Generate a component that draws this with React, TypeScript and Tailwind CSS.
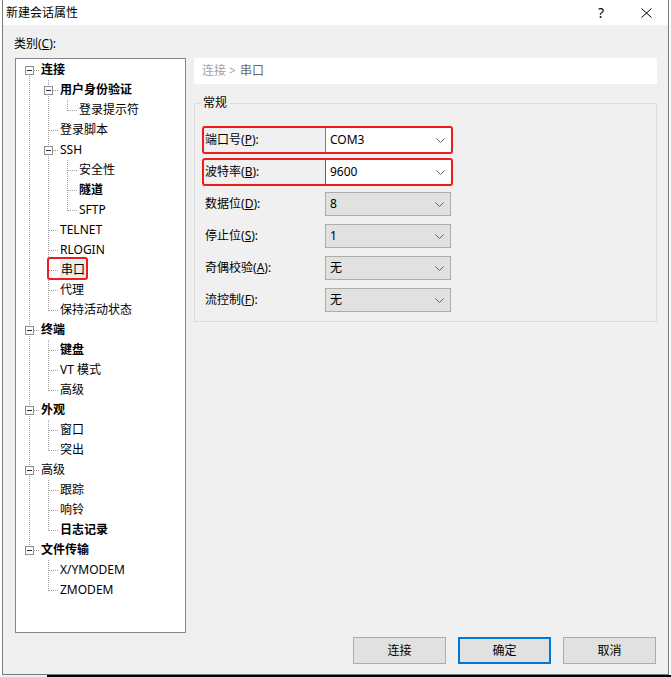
import clsx from "clsx"

type TreeNode = { label: string; bold?: boolean; selected?: boolean; children?: TreeNode[] }

type Row = { node: TreeNode; level: number; rails: boolean[]; last: boolean; first: boolean }

const tree: TreeNode[] = [
  {
    label: "连接",
    bold: true,
    children: [
      { label: "用户身份验证", bold: true, children: [{ label: "登录提示符" }] },
      { label: "登录脚本" },
      { label: "SSH", children: [{ label: "安全性" }, { label: "隧道", bold: true }, { label: "SFTP" }] },
      { label: "TELNET" },
      { label: "RLOGIN" },
      { label: "串口", selected: true },
      { label: "代理" },
      { label: "保持活动状态" },
    ],
  },
  { label: "终端", bold: true, children: [{ label: "键盘", bold: true }, { label: "VT 模式" }, { label: "高级" }] },
  { label: "外观", bold: true, children: [{ label: "窗口" }, { label: "突出" }] },
  { label: "高级", children: [{ label: "跟踪" }, { label: "响铃" }, { label: "日志记录", bold: true }] },
  { label: "文件传输", bold: true, children: [{ label: "X/YMODEM" }, { label: "ZMODEM" }] },
]

const flatten = (nodes: TreeNode[], level: number, rails: boolean[], out: Row[]) => {
  nodes.forEach((node, i) => {
    const last = i === nodes.length - 1
    out.push({ node, level, rails, last, first: level === 0 && i === 0 })
    if (node.children) flatten(node.children, level + 1, [...rails, !last], out)
  })
  return out
}

const rows = flatten(tree, 0, [], [])

const DOT = "#a0a0a0"

const Rail = ({ on }: { on: boolean }) => (
  <svg width="19" height="20" className="shrink-0">
    {on && <line x1="9.5" y1="0" x2="9.5" y2="20" stroke={DOT} strokeDasharray="1 1" />}
  </svg>
)

const Joint = ({ first, last, expander }: { first: boolean; last: boolean; expander: boolean }) => (
  <svg width="19" height="20" className="shrink-0">
    <line x1="9.5" y1={first ? 10 : 0} x2="9.5" y2={last ? 11 : 20} stroke={DOT} strokeDasharray="1 1" />
    <line x1="10" y1="10.5" x2="19" y2="10.5" stroke={DOT} strokeDasharray="1 1" />
    {expander && (
      <>
        <rect x="5.5" y="6.5" width="8" height="8" fill="#fbfbfb" stroke="#8e8f8f" />
        <line x1="7" y1="10.5" x2="12" y2="10.5" stroke="#1f2b57" />
      </>
    )}
  </svg>
)

const TreeRow = ({ row }: { row: Row }) => (
  <div className="relative flex h-[20px] items-center">
    {row.rails.map((on, i) => (
      <Rail key={i} on={on} />
    ))}
    <Joint first={row.first} last={row.last} expander={!!row.node.children} />
    <span
      className={clsx(
        "ml-[2px] whitespace-nowrap leading-[20px]",
        row.node.bold && "font-bold",
        row.node.selected && "bg-[#ececec] px-px -ml-px"
      )}
    >
      {row.node.label}
    </span>
    {row.node.selected && (
      <span className="pointer-events-none absolute left-[27px] top-[-3px] h-[23px] w-[41px] rounded-[3px] border-2 border-[#f01c1c]" />
    )}
  </div>
)

const Chevron = () => (
  <svg width="9" height="5" className="shrink-0">
    <polyline points="0.5,0.5 4.5,4.5 8.5,0.5" fill="none" stroke="#606060" strokeWidth="1" />
  </svg>
)

const fields = [
  { name: "端口号", key: "P", value: "COM3", kind: "open", marked: true },
  { name: "波特率", key: "B", value: "9600", kind: "focus", marked: true },
  { name: "数据位", key: "D", value: "8", kind: "plain", marked: false },
  { name: "停止位", key: "S", value: "1", kind: "plain", marked: false },
  { name: "奇偶校验", key: "A", value: "无", kind: "plain", marked: false },
  { name: "流控制", key: "F", value: "无", kind: "plain", marked: false },
]

const Button = ({ label, primary }: { label: string; primary?: boolean }) => (
  <button
    className={clsx(
      "flex h-[27px] w-[93px] items-center justify-center bg-[#e1e1e1] text-[12px] text-black",
      primary ? "border-2 border-[#0078d7]" : "border border-[#adadad]"
    )}
  >
    {label}
  </button>
)

export default function App() {
  return (
    <div className="h-[677px] w-[671px] overflow-hidden bg-white font-['Noto_Sans','Noto_Sans_CJK_SC',sans-serif] text-[12px] text-black">
      <div className="ml-[2px] flex h-[675px] w-[667px] flex-col border-x border-b border-[#7a7a7a]">
        <div className="flex h-[25px] items-center bg-white">
          <span className="pl-[3px] leading-4">新建会话属性</span>
          <span className="ml-auto mr-[37px] text-[14px] leading-4">?</span>
          <svg width="11" height="10" className="mr-[16px]">
            <path d="M0.5 0.5 L10.5 9.5 M10.5 0.5 L0.5 9.5" stroke="#000" strokeWidth="1" />
          </svg>
        </div>

        <div className="flex flex-1 flex-col bg-[#f0f0f0] pl-[12px] pr-[10px]">
          <div className="-ml-px mt-[11px] leading-4">
            类别(<span className="underline">C</span>):
          </div>

          <div className="mt-[6px] flex gap-[8px]">
            <div className="h-[575px] w-[171px] border border-[#828790] bg-white pl-[4px] pt-px">
              {rows.map((row, i) => (
                <TreeRow key={i} row={row} />
              ))}
            </div>

            <div className="flex w-[463px] flex-col">
              <div className="flex h-[26px] items-center bg-white pl-[8px]">
                <span className="text-[#a3a3a3]">连接 &gt; </span>
                <span className="ml-1 text-[#6a6a6a]">串口</span>
              </div>

              <fieldset className="mt-[11px] border border-[#dcdcdc] pb-[9px] pt-[17px]">
                <legend className="ml-[6px] px-[2px] leading-4">常规</legend>
                <div className="flex flex-col gap-[8px] pl-[10px]">
                  {fields.map((f) => (
                    <div key={f.key} className="relative flex h-6 w-[246px] items-center">
                      <span className="w-[120px] leading-4">
                        {f.name}(<span className="underline">{f.key}</span>):
                      </span>
                      <div
                        className={clsx(
                          "flex h-6 w-[126px] items-center justify-between pr-[6px]",
                          f.kind === "plain" && "border border-[#adadad] bg-[#e1e1e1] pl-[4px]",
                          f.kind === "open" && "border-l border-[#7a7a7a] bg-white pl-[4px]",
                          f.kind === "focus" && "border-l border-[#0078d7] bg-white pl-[4px]"
                        )}
                      >
                        <span className="leading-4">{f.value}</span>
                        <Chevron />
                      </div>
                      {f.marked && (
                        <span className="pointer-events-none absolute -bottom-[2px] -left-[3px] -right-[2px] -top-[2px] rounded-[3px] border-2 border-[#f01c1c]" />
                      )}
                    </div>
                  ))}
                </div>
              </fieldset>
            </div>
          </div>

          <div className="mt-[4px] flex justify-end gap-[12px] pr-[2px]">
            <Button label="连接" />
            <Button label="确定" primary />
            <Button label="取消" />
          </div>
        </div>
      </div>
      <div className="flex h-[2px]">
        <div className="w-[47px] bg-[#f0f0f0]" />
        <div className="flex-1 bg-black" />
      </div>
    </div>
  )
}
